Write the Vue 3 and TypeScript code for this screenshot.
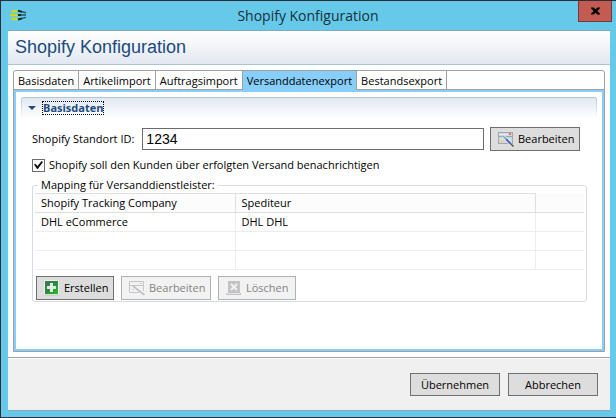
<script setup lang="ts">
import { ref } from 'vue'

interface Mapping {
  company: string
  carrier: string
}

const tabs: string[] = ['Basisdaten', 'Artikelimport', 'Auftragsimport', 'Versanddatenexport', 'Bestandsexport']
const activeTab = ref('Versanddatenexport')
const locationId = ref('1234')
const notifyCustomer = ref(true)
const mappings = ref<Mapping[]>([
  { company: 'DHL eCommerce', carrier: 'DHL DHL' },
  { company: '', carrier: '' },
  { company: '', carrier: '' },
])
</script>

<template>
  <div class="window">
    <header class="titlebar">
      <svg class="app-icon" width="18" height="14" viewBox="0 0 18 14" aria-hidden="true">
        <path d="M1 3.6 L2.5 2 H7.5 V4.2 L2 4.8 Z M0 6 H7.5 V8.2 H0 Z M2 9.4 L7.5 10 V12.2 H2.5 L1 10.8 Z" fill="#c9da1c" />
        <path d="M8 2.8 L16 4.8 M8 7 H16 M8 11.4 L16 9.4" stroke="#2a565f" stroke-width="1.4" fill="none" />
        <path d="M8 2.6 L12 3.8 M8 7 H11 M8 11.6 L12 10.4" stroke="#14282c" stroke-width="1.8" fill="none" />
      </svg>
      <span class="title">Shopify Konfiguration</span>
      <button class="close" type="button" aria-label="Schließen">
        <svg width="9" height="8" viewBox="0 0 10 8" aria-hidden="true">
          <path d="M0 0 H3 L5 2 L7 0 H10 V1 L7 4 L10 7 V8 H7 L5 6 L3 8 H0 V7 L3 4 L0 1 Z" fill="#000" />
        </svg>
      </button>
    </header>

    <main class="client">
      <h1 class="banner">Shopify Konfiguration</h1>

      <div class="body">
        <div class="folder">
          <div class="tabs" role="tablist">
            <button
              v-for="tab in tabs"
              :key="tab"
              type="button"
              role="tab"
              class="tab"
              :class="{ active: tab === activeTab }"
              :aria-selected="tab === activeTab"
              @click="activeTab = tab"
            >{{ tab }}</button>
          </div>

          <div class="page">
            <section class="section">
              <h2 class="section-head">
                <svg width="8" height="4" viewBox="0 0 8 4" aria-hidden="true"><path d="M0 0 H8 L4 4 Z" fill="#1b4a80" /></svg>
                <button type="button" class="section-toggle">Basisdaten</button>
              </h2>

              <div class="section-body">
                <div class="id-row">
                  <label for="location" class="id-label">Shopify Standort ID:</label>
                  <input id="location" v-model="locationId" type="text" class="text" />
                  <button type="button" class="btn icon-btn edit">
                    <svg width="16" height="16" viewBox="0 0 16 16" aria-hidden="true">
                      <rect x="0.5" y="1.5" width="14" height="11" fill="#d3d7da" stroke="#a3a7ab" />
                      <path d="M1 5.5 H14" stroke="#6fb0d4" />
                      <path d="M1 3.5 H10 M2 8.5 H5 M8 8.5 H13" stroke="#e6e9eb" />
                      <rect x="11" y="2" width="2" height="2" fill="#e8705a" />
                      <rect x="3" y="9" width="2" height="2" fill="#e6d283" />
                      <path d="M5 5 L13 13" stroke="#f2f4f8" stroke-width="3" />
                      <path d="M5 5 L8 8" stroke="#8d9298" stroke-width="1.4" />
                      <path d="M8 8 L13 13" stroke="#3f62c4" stroke-width="1.8" />
                      <path d="M13 13 L15.5 15.5" stroke="#665733" stroke-width="1.5" />
                    </svg>
                    <span>Bearbeiten</span>
                  </button>
                </div>

                <label class="check-row">
                  <input v-model="notifyCustomer" type="checkbox" class="check" />
                  <span>Shopify soll den Kunden über erfolgten Versand benachrichtigen</span>
                </label>

                <fieldset class="group">
                  <legend>Mapping für Versanddienstleister:</legend>
                  <table class="grid">
                    <colgroup><col class="c1" /><col class="c2" /><col class="c3" /></colgroup>
                    <thead>
                      <tr><th>Shopify Tracking Company</th><th>Spediteur</th><th></th></tr>
                    </thead>
                    <tbody>
                      <tr v-for="(row, i) in mappings" :key="i">
                        <td>{{ row.company }}</td><td>{{ row.carrier }}</td><td></td>
                      </tr>
                    </tbody>
                  </table>

                  <div class="actions">
                    <button type="button" class="btn icon-btn">
                      <svg width="16" height="16" viewBox="0 0 16 16" aria-hidden="true">
                        <defs>
                          <linearGradient id="green" x1="0" y1="0" x2="1" y2="1">
                            <stop offset="0" stop-color="#46735a" /><stop offset="0.5" stop-color="#2b8a3d" /><stop offset="1" stop-color="#22c922" />
                          </linearGradient>
                        </defs>
                        <rect x="0" y="0" width="15" height="15" fill="#eef2ee" />
                        <rect x="1" y="1" width="13" height="13" fill="url(#green)" />
                        <path d="M6 3 H9 V6 H12 V9 H9 V12 H6 V9 H3 V6 H6 Z" fill="#e4ebe4" />
                        <path d="M0 15 H15" stroke="#bcc4bc" />
                      </svg>
                      <span>Erstellen</span>
                    </button>
                    <button type="button" class="btn icon-btn edit" disabled>
                      <svg width="16" height="16" viewBox="0 0 16 16" aria-hidden="true">
                        <path d="M0.5 12.5 V1.5 H14.5 V11 M0 5.5 H15 M1 12.5 H10" stroke="#c6c6c6" fill="none" />
                        <path d="M4 6 L15.5 15" stroke="#c0c0c0" stroke-width="1.6" />
                        <path d="M11 3.5 H13 M3 9.5 H5" stroke="#c6c6c6" />
                      </svg>
                      <span>Bearbeiten</span>
                    </button>
                    <button type="button" class="btn icon-btn" disabled>
                      <svg width="16" height="16" viewBox="0 0 16 16" aria-hidden="true">
                        <path d="M2 1 H14 V13 H15 V15 H0 V13 H2 Z" fill="#c3c3c3" />
                        <path d="M1 13.5 H14" stroke="#e4e4e4" />
                        <path d="M5 4 L11 10 M11 4 L5 10" stroke="#f3f3f3" stroke-width="1.8" />
                      </svg>
                      <span>Löschen</span>
                    </button>
                  </div>
                </fieldset>
              </div>
            </section>
          </div>
        </div>
      </div>

      <footer class="footer">
        <button type="button" class="btn dialog-btn">Übernehmen</button>
        <button type="button" class="btn dialog-btn">Abbrechen</button>
      </footer>
    </main>
  </div>
</template>

<style>
body {
  margin: 0;
}
</style>

<style scoped>
.window {
  box-sizing: border-box;
  min-height: 100vh;
  display: flex;
  flex-direction: column;
  padding: 0 6px 6px 7px;
  border: solid #2c2e38;
  border-width: 1px 0 1px 1px;
  background: #66c9ea;
  color: #000;
  font: 11px/16px "Open Sans", "Noto Sans", sans-serif;
}
button,
input {
  font: inherit;
  color: inherit;
  margin: 0;
}
.titlebar {
  display: grid;
  grid-template-columns: 30px 1fr 32px;
  height: 29px;
}
.app-icon {
  margin: 7px 0 0 2px;
}
.title {
  justify-self: center;
  font-size: 14px;
  line-height: 30px;
  color: #16303a;
}
.close {
  display: flex;
  align-items: center;
  justify-content: center;
  justify-self: start;
  width: 34px;
  height: 21px;
  padding: 0;
  border: 1px solid #6b3b40;
  border-top: 0;
  background: #c35b52;
}
.client {
  flex: 1;
  display: flex;
  flex-direction: column;
  border: solid #84a9bd;
  border-width: 1px 0;
  background: #fff;
}
.banner {
  margin: 0;
  padding: 0 7px;
  height: 33px;
  border-bottom: 1px solid #a9c3d8;
  background: linear-gradient(#fff, #e2e8f1);
  color: #1b4a80;
  font: 18px/33px "Liberation Sans", Arial, sans-serif;
}
.body {
  flex: 1;
  display: flex;
  padding: 5px;
}
.folder {
  flex: 1;
  display: flex;
  flex-direction: column;
  border: 1px solid #a0a0a0;
  border-radius: 3px 3px 0 0;
}
.tabs {
  display: flex;
  height: 18px;
  border-bottom: 1px solid #a0a0a0;
}
.tab {
  padding: 1px 4px 0;
  border: 0;
  border-right: 1px solid #a0a0a0;
  background: transparent;
  line-height: 17px;
}
.tab.active {
  margin-bottom: -1px;
  padding-bottom: 1px;
  background: #87cefa;
}
.page {
  flex: 1;
  padding: 5px;
  border: 2px solid #87cefa;
}
.section-head {
  box-sizing: border-box;
  display: flex;
  align-items: center;
  gap: 6px;
  height: 21px;
  margin: 0;
  padding: 0 7px 1px;
  border-top: 1px solid #aec6da;
  border-radius: 3px 3px 0 0;
  background:
    linear-gradient(#aec6da, #fff) left / 1px 100% no-repeat,
    linear-gradient(#aec6da, #fff) right / 1px 100% no-repeat,
    linear-gradient(#e1e8f1, #fff);
  font-size: 11px;
}
.section-toggle {
  padding: 0;
  border: 1px dotted #000;
  background: none;
  color: #1b4a80;
  font-weight: 700;
  line-height: 12px;
}
.section-body {
  padding: 9px 10px 0 11px;
}
.id-row {
  display: flex;
  align-items: center;
  gap: 6px;
  padding-right: 7px;
}
.id-label {
  padding-right: 2px;
}
.text {
  box-sizing: border-box;
  flex: 1;
  min-width: 0;
  height: 22px;
  padding: 0 3px;
  border: 1px solid #6c6c6c;
  border-radius: 0;
  background: #fff;
  outline: 0;
  font: 14px/20px "Liberation Sans", Arial, sans-serif;
}
.btn {
  box-sizing: border-box;
  padding: 0;
  border: 1px solid #707070;
  border-radius: 0;
  background: #ddd;
}
.btn:disabled {
  border-color: #adb2b5;
  background: #f2f2f2;
  color: #838383;
}
.icon-btn {
  display: flex;
  align-items: center;
  gap: 4px;
  width: 78px;
  height: 24px;
  padding: 0 0 0 7px;
}
.icon-btn svg {
  flex: none;
}
.edit {
  width: 90px;
}
.check-row {
  display: flex;
  align-items: center;
  gap: 4px;
  margin-top: 6px;
}
.check {
  appearance: none;
  box-sizing: border-box;
  display: grid;
  place-content: center;
  width: 13px;
  height: 13px;
  border: 1px solid #6c6c6c;
  background: #fff;
}
.check:checked::before {
  content: "";
  width: 9px;
  height: 8px;
  background: #111;
  clip-path: polygon(0 45%, 15% 35%, 38% 62%, 85% 0, 100% 12%, 42% 100%, 34% 100%);
}
.group {
  min-width: 0;
  margin: 4px 0 0;
  padding: 0 2px 1px;
  border: 1px solid #d5dbe3;
  border-radius: 3px;
}
.group legend {
  margin-left: 3px;
  padding: 0 3px;
  line-height: 16px;
}
.grid {
  width: 100%;
  table-layout: fixed;
  border-collapse: collapse;
}
.c1 {
  width: 200px;
}
.c3 {
  width: 49px;
}
.grid th,
.grid td {
  box-sizing: border-box;
  height: 19px;
  padding: 0 6px;
  border-bottom: 1px solid #ededed;
  border-right: 1px solid #ededed;
  line-height: 18px;
  text-align: left;
  font-weight: 400;
}
.grid th {
  border-color: #dedfe1;
  border-top: 1px solid #dedfe1;
  background: #fcfcfc;
}
.grid th:last-child,
.grid td:last-child {
  border-right: 0;
}
.grid th:last-child {
  border-top-color: #fcfcfc;
}
.actions {
  display: flex;
  gap: 7px;
  margin: 6px 1px 0;
}
.footer {
  display: flex;
  justify-content: flex-end;
  gap: 8px;
  padding: 15px 12px 14px;
  border-top: 1px solid #a0a0a0;
  box-shadow: inset 0 1px #fff;
  background: #f0f0f0;
}
.dialog-btn {
  width: 90px;
  height: 23px;
}
</style>
